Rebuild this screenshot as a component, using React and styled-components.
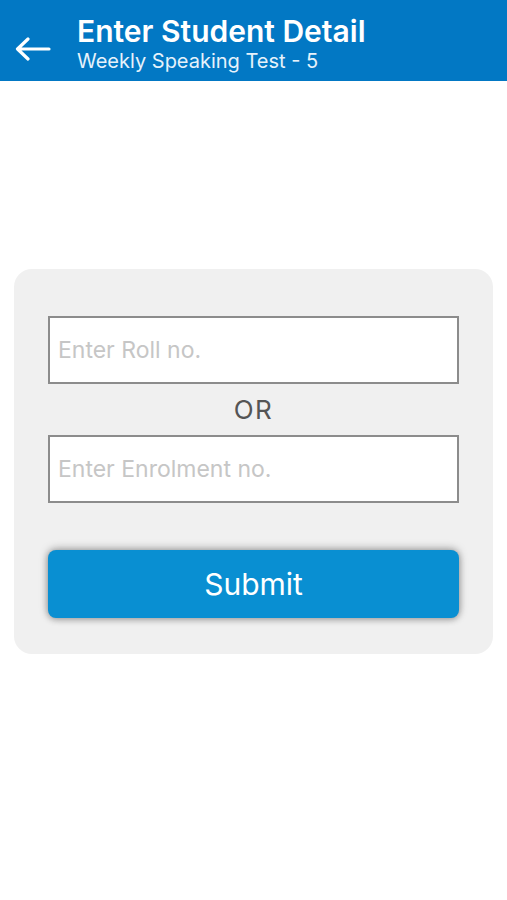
import React from "react";
import styled, { createGlobalStyle } from "styled-components";

const FONT = `Inter, "Noto Sans", "Liberation Sans", Arial, sans-serif`;

const Global = createGlobalStyle`
  html, body { margin: 0; padding: 0; background: #ffffff; }
  body { font-family: ${FONT}; }
  * { box-sizing: border-box; }
`;

const Page = styled.div`
  width: 507px;
  min-height: 900px;
  background: #ffffff;
  display: flex;
  flex-direction: column;
`;

const Header = styled.header`
  height: 81px;
  background: #0278c4;
  display: flex;
  align-items: center;
  padding-left: 14px;
`;

const BackButton = styled.button`
  width: 38px;
  height: 30px;
  margin-top: 16px;
  padding: 0;
  border: none;
  background: transparent;
  display: flex;
  align-items: center;
  justify-content: center;
  cursor: pointer;
`;

const Titles = styled.div`
  display: flex;
  flex-direction: column;
  margin-left: 25px;
  margin-top: 5px;
  color: #ffffff;
`;

const Title = styled.h1`
  margin: 0;
  font-size: 30px;
  line-height: 34px;
  font-weight: 600;
`;

const Subtitle = styled.div`
  font-size: 20px;
  line-height: 24px;
  margin-top: 1px;
  font-weight: 400;
  color: #e6f2fb;
`;

const Body = styled.main`
  display: flex;
  flex-direction: column;
  padding: 188px 14px 0;
`;

const Card = styled.section`
  background: #f0f0f0;
  border-radius: 18px;
  padding: 47px 34px 36px;
  display: flex;
  flex-direction: column;
`;

const Field = styled.input`
  width: 100%;
  height: 68px;
  border: 2px solid #8c8c8c;
  background: #ffffff;
  padding: 0 8px;
  font-family: ${FONT};
  font-size: 23px;
  color: #333;
  outline: none;
  border-radius: 0;
  &::placeholder { color: #c6c6c6; }
`;

const Or = styled.div`
  height: 51px;
  display: flex;
  align-items: center;
  justify-content: center;
  font-size: 26px;
  letter-spacing: 1.5px;
  color: #555555;
`;

const Submit = styled.button`
  margin-top: 47px;
  height: 68px;
  width: 100%;
  border: none;
  border-radius: 8px;
  background: #098fd2;
  color: #ffffff;
  font-family: ${FONT};
  font-size: 30px;
  box-shadow: 0 -1px 8px rgba(0, 0, 0, 0.35), 0 2px 6px rgba(0, 0, 0, 0.2);
  cursor: pointer;
`;

export default function App() {
  return (
    <Page>
      <Global />
      <Header>
        <BackButton aria-label="Back">
          <svg width="36" height="24" viewBox="0 0 36 24" fill="none">
            <path d="M34 12H3M13 2L2.5 12L13 22" stroke="#ffffff" strokeWidth="3.2" strokeLinecap="round" strokeLinejoin="round" />
          </svg>
        </BackButton>
        <Titles>
          <Title>Enter Student Detail</Title>
          <Subtitle>Weekly Speaking Test - 5</Subtitle>
        </Titles>
      </Header>
      <Body>
        <Card>
          <Field placeholder="Enter Roll no." />
          <Or>OR</Or>
          <Field placeholder="Enter Enrolment no." />
          <Submit>Submit</Submit>
        </Card>
      </Body>
    </Page>
  );
}
